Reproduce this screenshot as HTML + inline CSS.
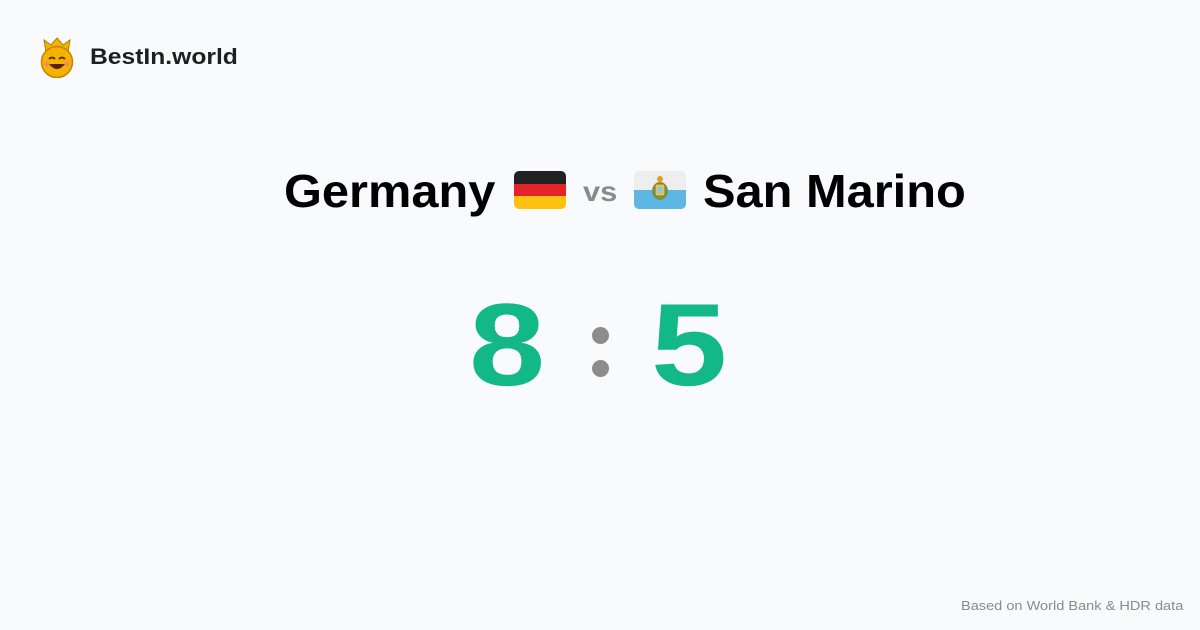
<!DOCTYPE html>
<html><head><meta charset="utf-8"><style>
body{margin:0;width:1200px;height:630px;background:#f9fafb;font-family:"Liberation Sans",sans-serif;position:relative;overflow:hidden}
.abs{position:absolute;white-space:nowrap}
.logo{left:90px;top:44px;font-size:22px;font-weight:bold;color:#1f1f1f;transform:scaleX(1.12);transform-origin:left}
.name{font-size:46px;font-weight:bold;color:#000;top:164px;transform:scaleX(1.06);transform-origin:left}
.vs{left:583px;top:176px;font-size:28px;font-weight:bold;color:#8a8a8a;transform:scaleX(1.1);transform-origin:left}
.flag{width:52px;height:38px;border-radius:5px;overflow:hidden;top:171px}
.num{font-size:117px;font-weight:bold;color:#12b886;top:286px;line-height:1;transform:scaleX(1.17);transform-origin:left}
.dot{width:17px;height:17px;border-radius:50%;background:#8c8c8c;left:592px}
.foot{left:961px;top:598px;font-size:13px;color:#8a8a8a;transform:scaleX(1.12);transform-origin:left}
</style></head><body>
<svg class="abs" style="left:38px;top:36px" width="38" height="42" viewBox="0 0 38 42">
<path d="M8 16 L6 4 L13 9 L19 2 L25 9 L32 4 L30 16 Z" fill="#f5b300" stroke="#b37a00" stroke-width="1"/>
<circle cx="19" cy="26" r="15.5" fill="#f5b300" stroke="#c98200" stroke-width="1.5"/>
<path d="M11 23 q3-3 6 0 M21 23 q3-3 6 0" stroke="#5a3200" stroke-width="2" fill="none"/>
<path d="M11 28 q8 10 16 0 Z" fill="#5a2000"/>
<circle cx="9" cy="28" r="2.5" fill="#f08a6a"/><circle cx="29" cy="28" r="2.5" fill="#f08a6a"/>
</svg>
<div class="abs logo">BestIn.world</div>
<div class="abs name" style="left:284px">Germany</div>
<div class="abs flag" style="left:514px"><div style="height:13px;background:#222"></div><div style="height:12px;background:#e5232a"></div><div style="height:13px;background:#ffc20e"></div></div>
<div class="abs vs">vs</div>
<div class="abs flag" style="left:634px"><div style="height:19px;background:#eeeeee"></div><div style="height:19px;background:#5eb6e4"></div>
<svg class="abs" style="left:16px;top:4px" width="20" height="30" viewBox="0 0 20 30"><circle cx="10" cy="4" r="3" fill="#e0a020"/><ellipse cx="10" cy="16" rx="8" ry="9" fill="#6a9a50"/><rect x="5" y="9" width="10" height="12" rx="2" fill="#f0c050" stroke="#a07020"/><rect x="7" y="12" width="6" height="6" fill="#8ac8e8"/></svg></div>
<div class="abs name" style="left:703px">San Marino</div>
<div class="abs num" style="left:469px">8</div>
<div class="abs dot" style="top:327px"></div>
<div class="abs dot" style="top:360px"></div>
<div class="abs num" style="left:651px">5</div>
<div class="abs foot">Based on World Bank &amp; HDR data</div>
</body></html>
